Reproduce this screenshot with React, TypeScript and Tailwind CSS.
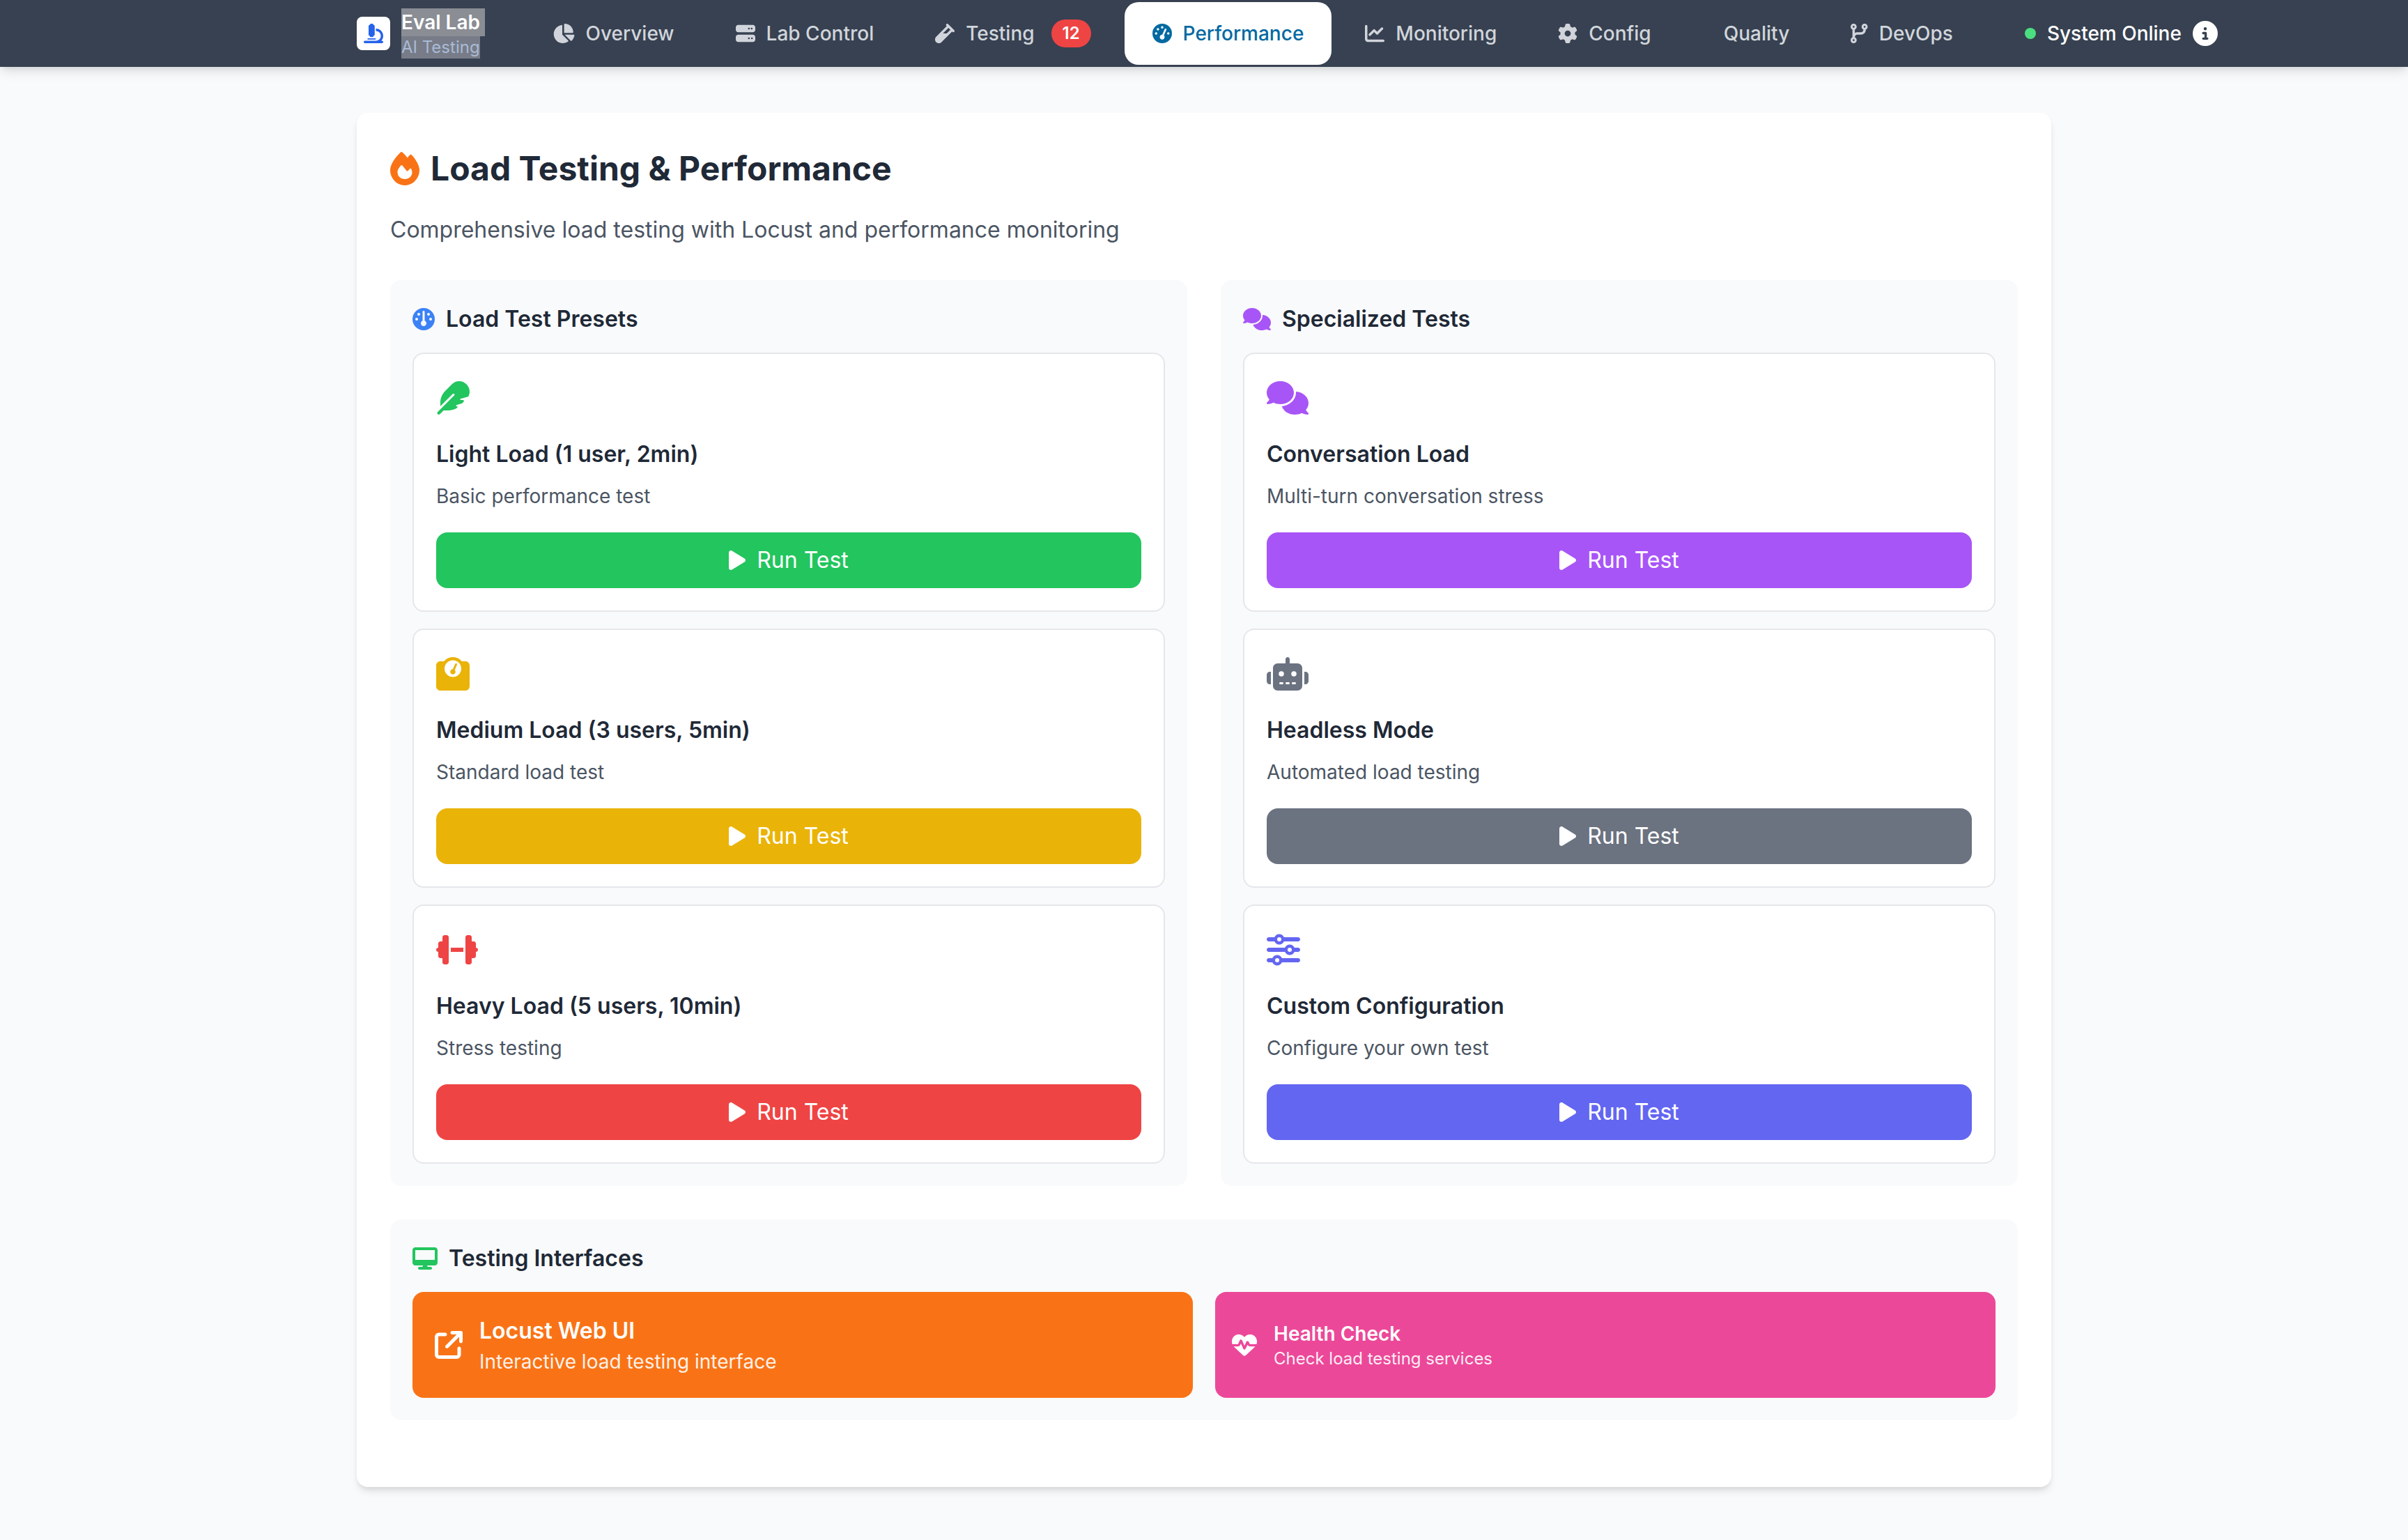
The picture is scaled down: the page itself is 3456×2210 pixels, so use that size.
import React from "react";
import {
  FaMicroscope, FaChartPie, FaServer, FaVial, FaGaugeHigh, FaGauge, FaChartLine, FaGear, FaCodeBranch, FaCircleInfo,
  FaFire, FaComments, FaFeather, FaWeightScale, FaDumbbell, FaRobot, FaSliders, FaPlay, FaDesktop,
  FaArrowUpRightFromSquare, FaHeartPulse,
} from "react-icons/fa6";

type Preset = { icon: React.ReactNode; title: string; desc: string; btn: string };

const left: Preset[] = [
  { icon: <FaFeather className="w-[48px] h-[48px] text-[#22c55e]" />, title: "Light Load (1 user, 2min)", desc: "Basic performance test", btn: "bg-[#22c55e]" },
  { icon: <FaWeightScale className="w-[48px] h-[48px] text-[#eab308]" />, title: "Medium Load (3 users, 5min)", desc: "Standard load test", btn: "bg-[#eab308]" },
  { icon: <FaDumbbell className="w-[60px] h-[48px] text-[#ef4444]" />, title: "Heavy Load (5 users, 10min)", desc: "Stress testing", btn: "bg-[#ef4444]" },
];
const right: Preset[] = [
  { icon: <FaComments className="w-[60px] h-[48px] text-[#a855f7]" />, title: "Conversation Load", desc: "Multi-turn conversation stress", btn: "bg-[#a855f7]" },
  { icon: <FaRobot className="w-[60px] h-[48px] text-[#6b7280]" />, title: "Headless Mode", desc: "Automated load testing", btn: "bg-[#6b7280]" },
  { icon: <FaSliders className="w-[48px] h-[48px] text-[#6366f1]" />, title: "Custom Configuration", desc: "Configure your own test", btn: "bg-[#6366f1]" },
];

function NavItem({ icon, label, active, children }: { icon?: React.ReactNode; label: string; active?: boolean; children?: React.ReactNode }) {
  return (
    <a
      className={
        active
          ? "flex items-center gap-4 px-10 h-[90px] rounded-[20px] bg-white text-[#0369a1] text-[28px] leading-[40px] font-medium whitespace-nowrap shrink-0"
          : "flex items-center gap-4 px-10 h-[90px] rounded-[20px] text-[#d1d5db] text-[28px] leading-[40px] font-medium whitespace-nowrap shrink-0"
      }
    >
      {icon ?? <span className="w-0" />}
      <span>{label}</span>
      {children}
    </a>
  );
}

function PresetCard({ p }: { p: Preset }) {
  return (
    <div className="bg-white border-2 border-[#e5e7eb] rounded-[16px] p-8">
      <div className="h-[88px] pt-[7px]">{p.icon}</div>
      <h4 className="text-[32px] leading-[48px] font-semibold text-[#1f2937] mb-4">{p.title}</h4>
      <p className="text-[28px] leading-[40px] text-[#4b5563] mb-8">{p.desc}</p>
      <button className={`w-full h-[80px] rounded-[16px] text-white flex items-center justify-center gap-4 text-[32px] font-normal ${p.btn}`}>
        <FaPlay className="w-[24px] h-[32px]" />
        <span>Run Test</span>
      </button>
    </div>
  );
}

function Column({ icon, title, items }: { icon: React.ReactNode; title: string; items: Preset[] }) {
  return (
    <section className="bg-[#f9fafb] rounded-[16px] p-8">
      <h3 className="flex items-center gap-4 h-[44px] pt-1 mb-7 text-[32px] leading-[40px] font-semibold text-[#1f2937]">
        {icon}
        <span>{title}</span>
      </h3>
      <div className="flex flex-col gap-6">
        {items.map((p) => (
          <PresetCard key={p.title} p={p} />
        ))}
      </div>
    </section>
  );
}

export default function App() {
  return (
    <div className="min-h-screen bg-[#f9fafb] [font-family:Inter,sans-serif]">
      <nav className="h-[96px] bg-[#374151] shadow-[0_8px_16px_-2px_rgba(0,0,0,0.12),0_4px_8px_-4px_rgba(0,0,0,0.1)]">
        <div className="w-[2432px] mx-auto h-full flex items-center">
          <div className="flex items-center gap-4 shrink-0">
            <div className="w-[48px] h-[48px] bg-white rounded-[8px] flex items-center justify-center">
              <FaMicroscope className="w-[28px] h-[28px] text-[#2563eb]" />
            </div>
            <div className="w-[120px]">
              <div className="bg-[#8a8d94] text-white text-[28px] leading-[40px] font-semibold whitespace-nowrap">Eval Lab</div>
              <div className="bg-[#777c88] w-[113px] text-[#a9bad6] text-[24px] leading-[32px] whitespace-nowrap">AI Testing</div>
            </div>
          </div>
          <div className="flex items-center gap-2 ml-[57px] shrink-0">
            <NavItem icon={<FaChartPie className="w-[31.5px] h-[28px]" />} label="Overview" />
            <NavItem icon={<FaServer className="w-[28px] h-[28px]" />} label="Lab Control" />
            <NavItem icon={<FaVial className="w-[28px] h-[28px]" />} label="Testing">
              <span className="ml-2 w-[57px] h-[40px] rounded-full bg-[#ef4444] text-white text-[24px] leading-[40px] font-semibold text-center">12</span>
            </NavItem>
            <NavItem active icon={<FaGaugeHigh className="w-[28px] h-[28px]" />} label="Performance" />
            <NavItem icon={<FaChartLine className="w-[28px] h-[28px]" />} label="Monitoring" />
            <NavItem icon={<FaGear className="w-[28px] h-[28px]" />} label="Config" />
            <NavItem label="Quality" />
            <NavItem icon={<FaCodeBranch className="w-[24.5px] h-[28px]" />} label="DevOps" />
          </div>
          <div className="flex items-center gap-4 ml-[63px] shrink-0">
            <span className="w-[16px] h-[16px] rounded-full bg-[#4ade80]" />
            <span className="text-white text-[28px] leading-[40px] font-medium whitespace-nowrap">System Online</span>
            <FaCircleInfo className="w-[36px] h-[36px] text-white" />
          </div>
        </div>
      </nav>

      <main className="w-[2432px] mx-auto pt-[66px]">
        <div className="bg-white rounded-[16px] px-12 pt-12 pb-24 shadow-[0_8px_12px_-2px_rgba(0,0,0,0.1),0_4px_8px_-4px_rgba(0,0,0,0.1)]">
          <h2 className="flex items-center gap-4 text-[48px] leading-[64px] font-bold text-[#1f2937] mb-8">
            <FaFire className="w-[42px] h-[48px] text-[#f97316]" />
            <span>Load Testing &amp; Performance</span>
          </h2>
          <p className="text-[32px] leading-[48px] text-[#4b5563] mb-12">Comprehensive load testing with Locust and performance monitoring</p>

          <div className="grid grid-cols-2 gap-12 mb-12">
            <Column icon={<FaGauge className="w-[32px] h-[32px] text-[#3b82f6]" />} title="Load Test Presets" items={left} />
            <Column icon={<FaComments className="w-[40px] h-[32px] text-[#a855f7]" />} title="Specialized Tests" items={right} />
          </div>

          <section className="bg-[#f9fafb] rounded-[16px] p-8">
            <h3 className="flex items-center gap-4 h-[44px] pt-1 mb-7 text-[32px] leading-[40px] font-semibold text-[#1f2937]">
              <FaDesktop className="w-[36px] h-[32px] text-[#22c55e]" />
              <span>Testing Interfaces</span>
            </h3>
            <div className="grid grid-cols-2 gap-8">
              <a className="flex items-center gap-6 h-[152px] px-8 rounded-[16px] bg-[#f97316] text-white">
                <FaArrowUpRightFromSquare className="w-[40px] h-[40px]" />
                <div>
                  <div className="text-[32px] leading-[48px] font-semibold">Locust Web UI</div>
                  <div className="text-[28px] leading-[40px] opacity-90">Interactive load testing interface</div>
                </div>
              </a>
              <a className="flex items-center gap-6 h-[152px] px-6 rounded-[16px] bg-[#ec4899] text-white">
                <FaHeartPulse className="w-[36px] h-[36px]" />
                <div>
                  <div className="text-[28px] leading-[40px] font-semibold">Health Check</div>
                  <div className="text-[24px] leading-[32px] opacity-90">Check load testing services</div>
                </div>
              </a>
            </div>
          </section>
        </div>
      </main>
    </div>
  );
}
